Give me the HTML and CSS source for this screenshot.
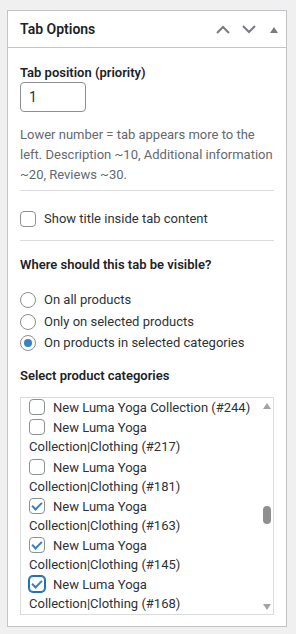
FILE: index.html
```html
<!DOCTYPE html>
<html lang="en">
<head>
    <meta charset="UTF-8">
    <title>Tab Options</title>
    <link rel="stylesheet" href="styles.css">
</head>
<body>

<div class="postbox">
    <div class="postbox-header">
        <h2>Tab Options</h2>
        <div class="handle-actions">
            <span class="handle-btn">
                <svg width="14" height="9" viewBox="0 0 14 9"><path d="M1 8 L7 2 L13 8" fill="none" stroke="#787c82" stroke-width="2"/></svg>
            </span>
            <span class="handle-btn">
                <svg width="14" height="9" viewBox="0 0 14 9"><path d="M1 1 L7 7 L13 1" fill="none" stroke="#787c82" stroke-width="2"/></svg>
            </span>
            <span class="handle-btn last">
                <svg width="8" height="6" viewBox="0 0 8 6"><path d="M0 6 L4 0 L8 6 Z" fill="#787c82"/></svg>
            </span>
        </div>
    </div>

    <div class="inside">
        <p class="field-label">Tab position (priority)</p>
        <input class="small-input" type="text" value="1">
        <p class="description">Lower number = tab appears more to the left. Description ~10, Additional information ~20, Reviews ~30.</p>

        <div class="row-check">
            <label class="check-line"><span class="cb"></span>Show title inside tab content</label>
        </div>

        <p class="field-label gap">Where should this tab be visible?</p>
        <div class="radios">
            <label class="check-line"><span class="rb"></span>On all products</label>
            <label class="check-line"><span class="rb"></span>Only on selected products</label>
            <label class="check-line"><span class="rb on"></span>On products in selected categories</label>
        </div>

        <p class="field-label cats">Select product categories</p>
        <div class="cat-box">
            <ul class="cat-list">
                <li><span class="cb"></span>New Luma Yoga Collection (#244)</li>
                <li><span class="cb"></span>New Luma Yoga Collection|Clothing (#217)</li>
                <li><span class="cb"></span>New Luma Yoga Collection|Clothing (#181)</li>
                <li><span class="cb checked"></span>New Luma Yoga Collection|Clothing (#163)</li>
                <li><span class="cb checked"></span>New Luma Yoga Collection|Clothing (#145)</li>
                <li><span class="cb checked focus"></span>New Luma Yoga Collection|Clothing (#168)</li>
            </ul>
            <div class="fake-scroll">
                <span class="arrow up"></span>
                <div class="track"><span class="thumb"></span></div>
                <span class="arrow down"></span>
            </div>
        </div>
    </div>
</div>

</body>
</html>
```
FILE: styles.css
```css
*{
    margin: 0;
    padding: 0;
    box-sizing: border-box;
}
body{
    background: #f0f0f1;
    font-family: Roboto, "Noto Sans", sans-serif;
    font-size: 13px;
    color: #1d2327;
    padding: 10px 10px 0 7px;
}
ul{
    list-style: none;
}
.postbox{
    width: 280px;
    height: 617px;
    background: #fff;
    border: 1px solid #c3c4c7;
}
.postbox-header{
    height: 37px;
    border-bottom: 1px solid #c3c4c7;
    display: flex;
    align-items: center;
    justify-content: space-between;
    padding-left: 12px;
}
.postbox-header h2{
    font-size: 14px;
    font-weight: 600;
    line-height: 20px;
}
.handle-actions{
    display: flex;
    height: 100%;
    padding-top: 1px;
}
.handle-btn{
    width: 26px;
    display: flex;
    align-items: center;
    justify-content: center;
}
.handle-btn.last{
    width: 24px;
    padding-top: 1px;
}
.inside{
    padding: 15px 12px 0;
}
.field-label{
    font-weight: 600;
    line-height: 19px;
}
.small-input{
    display: block;
    width: 66px;
    height: 30px;
    border: 1px solid #8c8f94;
    border-radius: 4px;
    padding: 0 8px;
    font-family: inherit;
    font-size: 14px;
    color: #2c3338;
}
.description{
    margin-top: 13px;
    color: #646970;
    line-height: 20px;
    padding-bottom: 5px;
    border-bottom: 1px solid #dcdcde;
}
.row-check{
    padding: 18px 0 11px;
    border-bottom: 1px solid #dcdcde;
}
.check-line{
    display: flex;
    align-items: center;
    line-height: 20px;
    color: #2c3338;
}
.cb{
    display: inline-block;
    flex: none;
    width: 16px;
    height: 16px;
    border: 1px solid #8c8f94;
    border-radius: 4px;
    background: #fff;
    margin-right: 8px;
    vertical-align: -3px;
    position: relative;
}
.cb.checked::after{
    content: "";
    position: absolute;
    left: 4px;
    top: 1px;
    width: 4px;
    height: 8px;
    border: solid #3582c4;
    border-width: 0 2px 2px 0;
    transform: rotate(45deg);
}
.cb.focus{
    border-color: #2271b1;
    box-shadow: 0 0 0 1px #2271b1;
}
.field-label.gap{
    margin-top: 14px;
    line-height: 20px;
}
.radios{
    margin-top: 15px;
    display: flex;
    flex-direction: column;
    gap: 1.5px;
}
.rb{
    flex: none;
    width: 16px;
    height: 16px;
    border: 1px solid #8c8f94;
    border-radius: 50%;
    margin-right: 8px;
    display: flex;
    align-items: center;
    justify-content: center;
}
.rb.on::before{
    content: "";
    width: 8px;
    height: 8px;
    border-radius: 50%;
    background: #3582c4;
}
.field-label.cats{
    margin-top: 13px;
    line-height: 20px;
}
.cat-box{
    margin-top: 11px;
    width: 254px;
    height: 218px;
    border: 1px solid #dcdcde;
    display: flex;
    overflow: hidden;
}
.cat-list{
    flex: 1;
    padding: 0 8px 0 8px;
    color: #2c3338;
}
.cat-list li{
    line-height: 19px;
    margin-bottom: 1.3px;
}
.cat-list .cb{
    margin-right: 8px;
}
.fake-scroll{
    width: 13px;
    display: flex;
    flex-direction: column;
    align-items: center;
    padding: 5px 0 4px;
}
.arrow{
    width: 0;
    height: 0;
    border-left: 4px solid transparent;
    border-right: 4px solid transparent;
}
.arrow.up{
    border-bottom: 6px solid #a3a3a3;
}
.arrow.down{
    border-top: 6px solid #a3a3a3;
}
.track{
    flex: 1;
    padding-top: 97px;
}
.thumb{
    display: block;
    width: 8px;
    height: 18px;
    border-radius: 4px;
    background: #8f8f8f;
}
```
